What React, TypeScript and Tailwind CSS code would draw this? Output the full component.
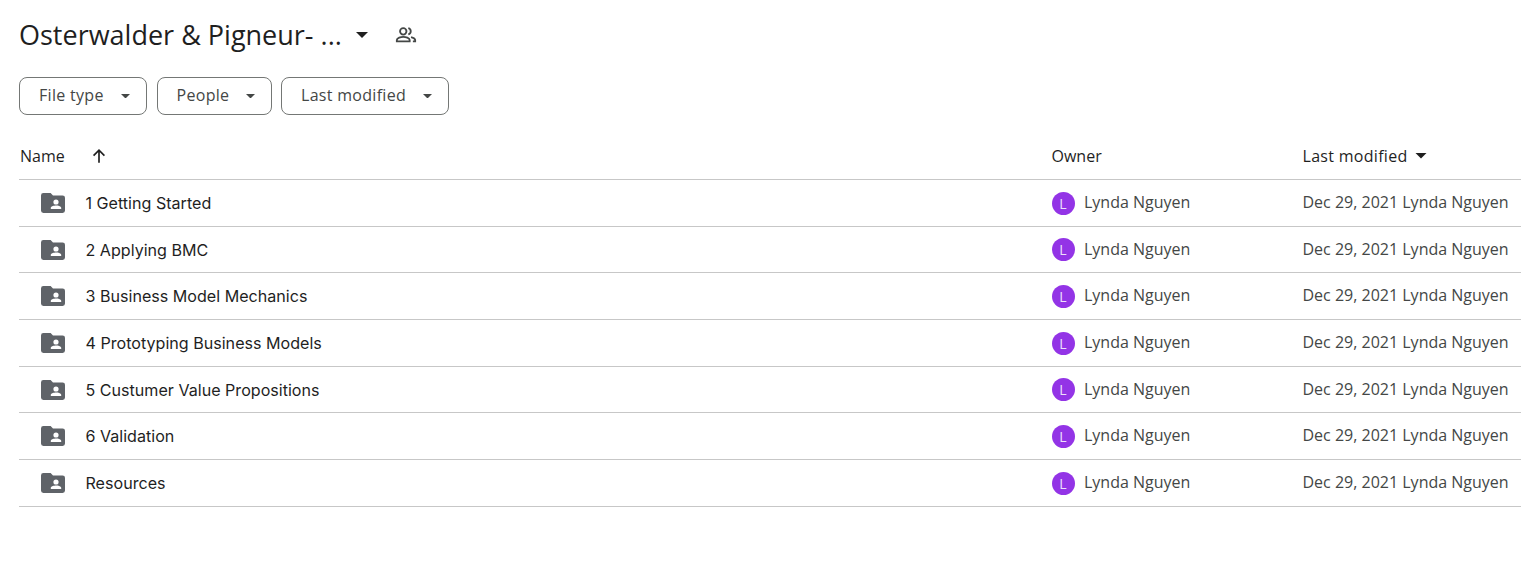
const rows = [
  '1 Getting Started',
  '2 Applying BMC',
  '3 Business Model Mechanics',
  '4 Prototyping Business Models',
  '5 Custumer Value Propositions',
  '6 Validation',
  'Resources',
]

function Caret({ className }: { className: string }) {
  return (
    <svg viewBox="0 0 10 5" className={className} fill="currentColor">
      <path d="M0 0l5 5 5-5z" />
    </svg>
  )
}

function SharedFolder() {
  return (
    <svg viewBox="0 0 24 20" className="h-5 w-6 text-[#5f6368]" fill="currentColor">
      <path
        fillRule="evenodd"
        d="M2.4 0h7.2l2.4 2.4h9.6A2.4 2.4 0 0 1 24 4.8v12.8a2.4 2.4 0 0 1-2.4 2.4H2.4A2.4 2.4 0 0 1 0 17.600V2.400A2.400 2.400 0 0 1 2.400 0zM15 6.400a2.600 2.600 0 1 0 0 5.200 2.600 2.600 0 0 0 0-5.200zM9.800 15.900h10.400v-1c0-1.500-3.400-2.300-5.200-2.300s-5.200.8-5.200 2.300z"
      />
    </svg>
  )
}

function SharedIcon() {
  return (
    <svg viewBox="0 0 24 24" className="h-[22px] w-[22px] text-[#444746]" fill="none" stroke="currentColor" strokeWidth="2">
      <circle cx="9" cy="8" r="3.500" />
      <path d="M2 19v-1.500c0-2.200 4.500-3.500 7-3.500s7 1.300 7 3.500V19z" />
      <path d="M14.500 4.600a3.500 3.500 0 0 1 0 6.800M17.500 14.200c2.300.6 4.500 1.700 4.500 3.300V19h-2.500" />
    </svg>
  )
}

function FilterButton({ label, width }: { label: string; width: string }) {
  return (
    <button className={`flex h-[38px] items-center justify-between rounded-lg border border-[#747775] pl-[19px] pr-[16px] text-[16px] tracking-[0.3px] text-[#444746] ${width}`}>
      <span className="-mt-[2px]">{label}</span>
      <Caret className="h-[4.500px] w-[9px]" />
    </button>
  )
}

function Row({ name }: { name: string }) {
  return (
    <div className="flex h-[46.67px] items-center border-b border-[#c7c7c7]">
      <div className="flex flex-1 items-center pl-[22px] pt-[0.700px]">
        <SharedFolder />
        <span className="ml-[20.500px] font-['Inter',sans-serif] text-[16.100px] text-[#1f1f1f]">{name}</span>
      </div>
      <div className="flex w-[251px] items-center">
        <div className="mt-[0.700px] flex h-[23px] w-[23px] items-center justify-center rounded-full bg-[#9334e6] text-[14px] text-[#ede0fb]">
          L
        </div>
        <span className="-mt-[1.300px] ml-[9.500px] text-[16px] text-[#444746]">Lynda Nguyen</span>
      </div>
      <div className="-mt-[1.300px] w-[218.500px] whitespace-nowrap text-[16px] text-[#444746]">Dec 29, 2021 Lynda Nguyen</div>
    </div>
  )
}

export default function App() {
  return (
    <div className="h-[587px] w-[1521px] overflow-hidden bg-white pl-[19px] font-['Open_Sans',sans-serif]">
      <div className="flex h-[70px] items-center">
        <h1 className="text-[27px] font-normal text-[#1f1f1f]">Osterwalder &amp; Pigneur- ...</h1>
        <Caret className="ml-[14px] h-[6px] w-[12px] text-[#1f1f1f]" />
        <div className="ml-[27px]">
          <SharedIcon />
        </div>
      </div>
      <div className="mt-[7px] flex gap-[9.500px]">
        <FilterButton label="File type" width="w-[128px]" />
        <FilterButton label="People" width="w-[115px]" />
        <FilterButton label="Last modified" width="w-[168px]" />
      </div>
      <div className="mt-[20px] flex h-[45px] items-center border-b border-[#c7c7c7] text-[16px] text-[#1f1f1f]">
        <div className="-mt-[2px] flex flex-1 items-center pl-[1px]">
          Name
          <svg viewBox="0 0 24 24" className="ml-[24px] h-5 w-5" fill="none" stroke="currentColor" strokeWidth="2">
            <path d="M12 20V5M5.500 11.500 12 5l6.500 6.500" />
          </svg>
        </div>
        <div className="-mt-[2px] w-[251px]">Owner</div>
        <div className="-mt-[2px] flex w-[218.500px] items-center tracking-[0.3px]">
          Last modified
          <Caret className="ml-[7px] h-[5.500px] w-[12px]" />
        </div>
      </div>
      {rows.map((name) => (
        <Row key={name} name={name} />
      ))}
    </div>
  )
}
